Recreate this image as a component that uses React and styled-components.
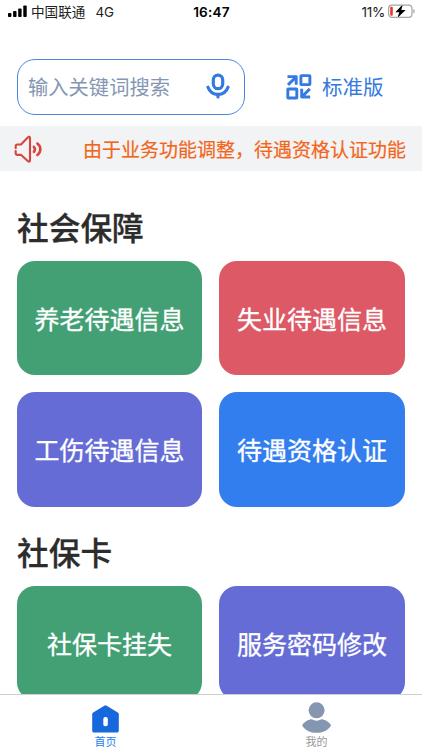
import React from "react";
import styled, { createGlobalStyle } from "styled-components";

const sections = [
  {
    title: "社会保障",
    cards: [
      { label: "养老待遇信息", color: "#43a075" },
      { label: "失业待遇信息", color: "#dc5965" },
      { label: "工伤待遇信息", color: "#666cd5" },
      { label: "待遇资格认证", color: "#337eee" },
    ],
  },
  {
    title: "社保卡",
    cards: [
      { label: "社保卡挂失", color: "#43a075" },
      { label: "服务密码修改", color: "#666cd5" },
    ],
  },
];

const SignalIcon = () => (
  <svg width="19" height="12" viewBox="0 0 19 12" fill="#000">
    <rect x="0" y="8" width="3.4" height="4" rx="0.8" />
    <rect x="5.1" y="6" width="3.4" height="6" rx="0.8" />
    <rect x="10.2" y="3.4" width="3.4" height="8.6" rx="0.8" />
    <rect x="15.3" y="0.5" width="3.4" height="11.5" rx="0.8" />
  </svg>
);

const BatteryIcon = () => (
  <svg width="28" height="15" viewBox="0 0 28 15">
    <rect x="1.6" y="1.1" width="23.4" height="12.3" rx="3.4" fill="#fff" stroke="#a5a5a5" strokeWidth="1.2" />
    <path d="M26.300 5v4.6c1-.4 1.4-1.2 1.4-2.3S27.300 5.400 26.300 5z" fill="#a5a5a5" />
    <rect x="3.2" y="2.8" width="2.6" height="9" rx="1" fill="#e6392f" />
    <path d="M15.800.3 8.400 8.200h3.900L10.400 14l8.200-8h-4.300z" fill="#000" stroke="#fff" strokeWidth="1" paintOrder="stroke" />
  </svg>
);

const MicIcon = () => (
  <svg width="24" height="26" viewBox="0 0 24 26" fill="none" stroke="#347ae0" strokeWidth="3.2">
    <rect x="7.3" y="2.1" width="9.4" height="13.6" rx="4.7" />
    <path d="M2 14.2C3.6 18.7 7.300 21.300 12 21.300s8.400-2.600 10-7.100" strokeLinecap="round" />
    <path d="M12 21.500v2.500" strokeLinecap="round" />
  </svg>
);

const SwitchIcon = () => (
  <svg width="26" height="26" viewBox="0 0 26 26" fill="none" stroke="#347ae0" strokeWidth="2.9" strokeLinejoin="round">
    <rect x="14.9" y="1.6" width="9" height="9" rx="0.5" />
    <rect x="1.8" y="15" width="9" height="9" rx="0.5" />
    <path d="M1.500 2.600h8.700v8.200M9.800 3.200 2 10.900" />
    <path d="M24.200 23h-8.500v-8.200M16.200 22.500l7.600-7.600" />
  </svg>
);

const SpeakerIcon = () => (
  <svg width="28" height="28" viewBox="0 0 28 28" fill="none" stroke="#d9453d" strokeWidth="2.1" strokeLinecap="round" strokeLinejoin="round">
    <path d="M1.700 13.300v-2.100c0-1 .6-1.700 1.700-1.700H7l7-7.300c.9-.8 2-.4 2 .8v22.400c0 1.200-1.100 1.600-2 .8l-6.800-6.300H3.400c-1.100 0-1.700-.6-1.700-1.700v-2.200" />
    <path d="M19.900 11.800c1.200 1.400 1.200 3.600 0 5" strokeWidth="2.600" />
    <path d="M23.400 8.600c3.900 3.200 3.900 8.200 0 11.400" strokeWidth="2.600" />
  </svg>
);

const HomeIcon = () => (
  <svg width="28" height="28" viewBox="0 0 28 28">
    <path d="M11.900.9c1-.6 2.200-.6 3.200 0l10.700 6.500c.7.400 1 1 1 1.700V25.400c0 1.400-.8 2.200-2.200 2.200H2.400C1 27.600.2 26.800.2 25.400V9.100c0-.7.300-1.300 1-1.700z" fill="#1668dc" />
    <rect x="11.300" y="12" width="4.500" height="9.300" rx="2" fill="#fff" />
  </svg>
);

const UserIcon = () => (
  <svg width="30" height="31" viewBox="0 0 30 31" fill="#8496b0">
    <circle cx="14.6" cy="8.3" r="8" />
    <path d="M8 17.400c1.400-.5 2.500-.2 3.500.5 2 1 4.200 1 6.200 0 1-.7 2.100-1 3.500-.5 3 .9 5.900 2.900 7.500 5.100.3.500.3.900 0 1.400C26.100 28 21 30.800 14.600 30.800S3.100 28 .5 23.900c-.3-.5-.3-.9 0-1.400C2.100 20.300 5 18.300 8 17.400z" />
  </svg>
);

export default function App() {
  return (
    <Screen>
      <GlobalStyle />
      <StatusBar>
        <Carrier>
          <SignalIcon />
          <span>中国联通</span>
          <Network>4G</Network>
        </Carrier>
        <Time>16:47</Time>
        <Battery>
          <span>11%</span>
          <BatteryIcon />
        </Battery>
      </StatusBar>
      <Header>
        <SearchBox>
          <span>输入关键词搜索</span>
          <MicIcon />
        </SearchBox>
        <ModeButton>
          <SwitchIcon />
          <ModeLabel>标准版</ModeLabel>
        </ModeButton>
      </Header>
      <Notice>
        <SpeakerIcon />
        <NoticeText>由于业务功能调整，待遇资格认证功能</NoticeText>
      </Notice>
      <Content>
        {sections.map((section) => (
          <section key={section.title}>
            <SectionTitle>{section.title}</SectionTitle>
            <CardGrid>
              {section.cards.map((card) => (
                <Card key={card.label} $color={card.color}>
                  {card.label}
                </Card>
              ))}
            </CardGrid>
          </section>
        ))}
      </Content>
      <TabBar>
        <Tab $active>
          <HomeIcon />
          <TabLabel>首页</TabLabel>
        </Tab>
        <Tab>
          <UserIcon />
          <TabLabel>我的</TabLabel>
        </Tab>
      </TabBar>
    </Screen>
  );
}

const GlobalStyle = createGlobalStyle`
  * {
    box-sizing: border-box;
  }

  body {
    margin: 0;
    background-color: #ffffff;
    font-family: Inter, "Noto Sans CJK SC", sans-serif;
  }
`;

const Screen = styled.div`
  display: flex;
  flex-direction: column;
  width: 422px;
  height: 750px;
  overflow: hidden;
  background-color: #ffffff;
`;

const StatusBar = styled.div`
  display: grid;
  grid-template-columns: 1fr auto 1fr;
  align-items: center;
  flex: none;
  height: 24px;
  padding: 0 7px 0 8px;
  font-size: 13.6px;
  line-height: 20px;
  color: #222222;
`;

const Carrier = styled.div`
  display: flex;
  align-items: center;

  span {
    margin-left: 4px;
  }

  svg {
    margin-top: -2px;
  }
`;

const Network = styled.em`
  margin-left: 10px;
  font-style: normal;
  font-size: 13.4px;
`;

const Time = styled.div`
  font-size: 13.6px;
  font-weight: 600;
  letter-spacing: 0.2px;
  color: #000000;
`;

const Battery = styled.div`
  display: flex;
  align-items: center;
  justify-content: flex-end;
  gap: 2px;
  letter-spacing: -0.3px;

  svg {
    margin-top: -1px;
  }
`;

const Header = styled.div`
  display: flex;
  align-items: center;
  flex: none;
  height: 102px;
  padding: 23px 17px 0;
`;

const SearchBox = styled.div`
  display: flex;
  align-items: center;
  justify-content: space-between;
  width: 228px;
  height: 56px;
  padding: 0 14px 2px 10px;
  border: 1.3px solid #4a86dc;
  border-radius: 18px;
  font-size: 20.3px;
  color: #8496b4;
`;

const ModeButton = styled.div`
  display: flex;
  align-items: center;
  gap: 10px;
  margin-left: 41px;
  font-size: 20.5px;
  color: #347ae0;
`;

const ModeLabel = styled.span`
  padding-bottom: 2px;
`;

const Notice = styled.div`
  display: flex;
  align-items: center;
  flex: none;
  height: 45px;
  padding-left: 14px;
  background-color: #f2f3f5;
`;

const NoticeText = styled.div`
  margin-left: 41px;
  padding-bottom: 1px;
  width: 323px;
  overflow: hidden;
  white-space: nowrap;
  font-size: 19px;
  color: #f2661a;
  -webkit-text-stroke: 0.2px #f2661a;
`;

const Content = styled.div`
  flex: 1;
  min-height: 0;
  padding: 33px 17px 0;
  overflow: hidden;
`;

const SectionTitle = styled.h2`
  height: 57px;
  margin: 0;
  font-size: 31.7px;
  font-weight: 500;
  line-height: 49px;
  color: #2c2c2c;
  -webkit-text-stroke: 0.3px #2c2c2c;
`;

const CardGrid = styled.div`
  display: grid;
  grid-template-columns: 185px 186px;
  grid-auto-rows: 114.4px;
  gap: 17px;
  margin-bottom: 22.2px;
`;

const Card = styled.div`
  display: flex;
  align-items: center;
  justify-content: center;
  padding-bottom: 1px;
  border-radius: 18px;
  background-color: ${(props) => props.$color};
  font-size: 25px;
  color: #ffffff;
  -webkit-text-stroke: 0.3px #ffffff;
`;

const TabBar = styled.div`
  display: flex;
  flex: none;
  height: 56px;
  border-top: 1px solid #cfcfcf;
  background-color: #ffffff;
`;

const Tab = styled.div`
  display: flex;
  flex: 1;
  flex-direction: column;
  align-items: center;
  justify-content: flex-end;
  color: ${(props) => (props.$active ? "#2380f2" : "#999999")};
`;

const TabLabel = styled.div`
  height: 17px;
  font-size: 11px;
  line-height: 19px;
`;
